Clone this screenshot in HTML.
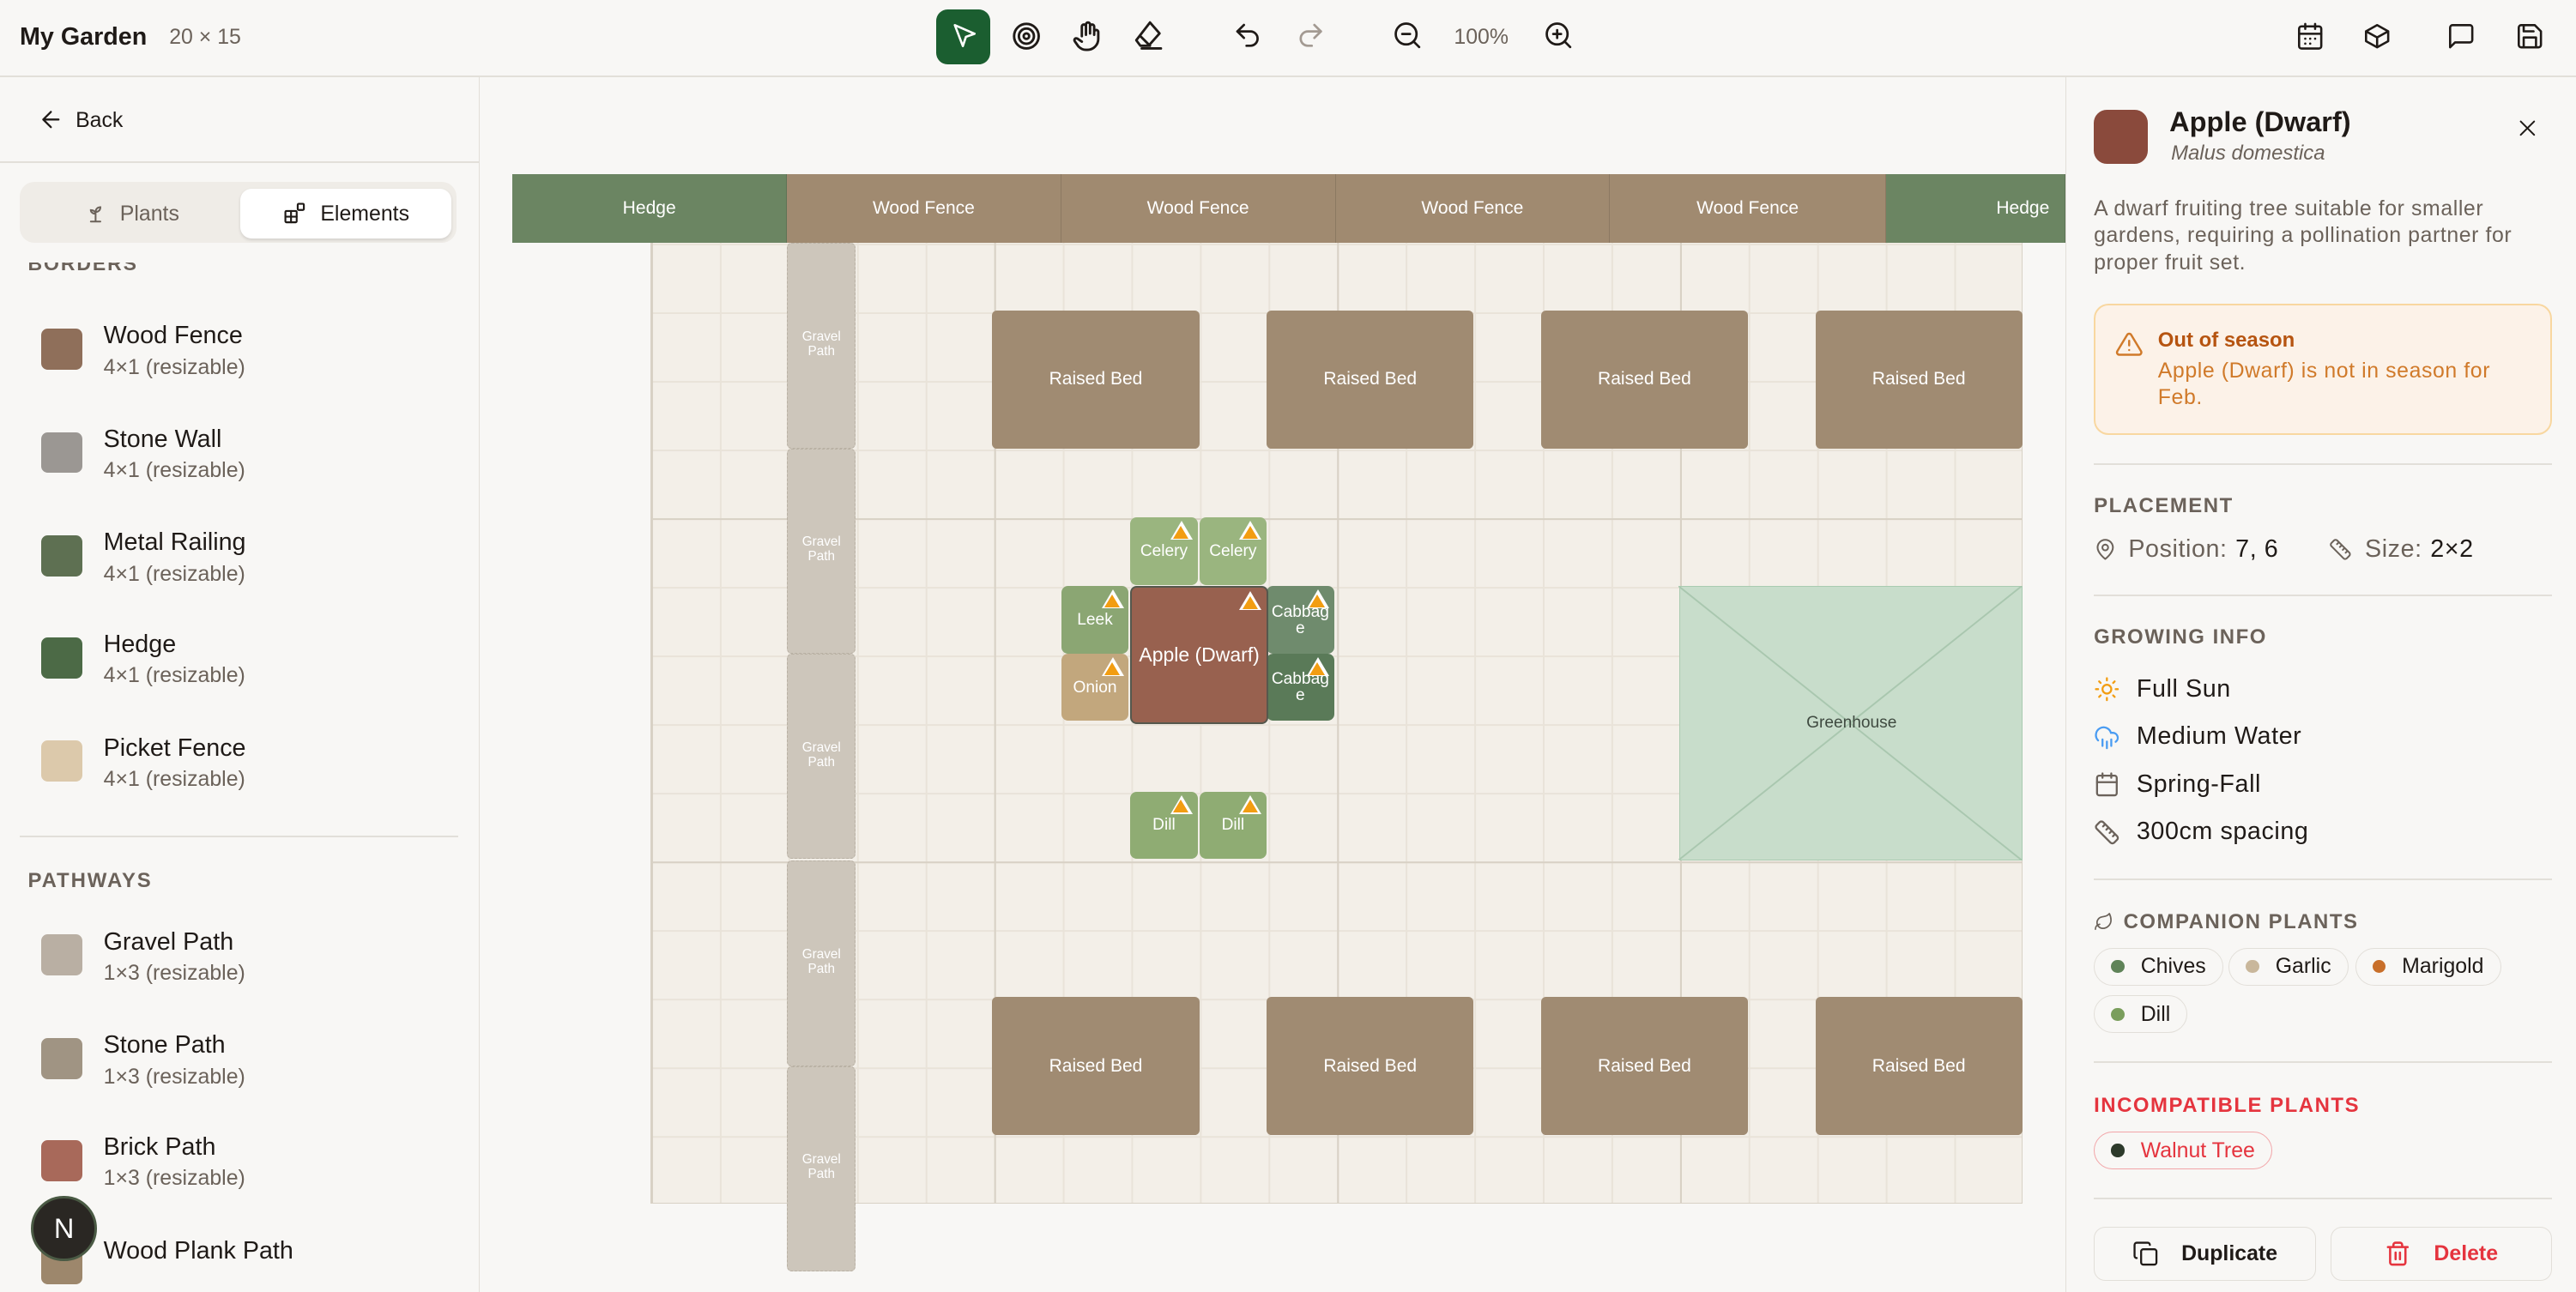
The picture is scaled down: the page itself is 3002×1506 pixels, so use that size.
<!DOCTYPE html>
<html><head><meta charset="utf-8"><style>
*{box-sizing:border-box;margin:0;padding:0}
html,body{width:3002px;height:1506px;overflow:hidden;background:#f8f7f5}
#r{width:1568px;height:787px;zoom:1.91454;position:relative;font-family:"Liberation Sans",sans-serif;color:#1f1a17;background:#f8f7f5;overflow:hidden}
.a{position:absolute}
.top{left:0;top:0;width:1568px;height:47px;border-bottom:1.5px solid #e2dfd9}
.ico{stroke:#1f1a17;fill:none;stroke-width:1.8;stroke-linecap:round;stroke-linejoin:round}
.left{left:0;top:47px;width:292px;height:740px;border-right:1px solid #e2dfd9}
.item .sw{position:absolute;left:25px;width:25px;height:25px;border-radius:4px}
.item .t{position:absolute;left:63px;font-size:15px;color:#1f1a17}
.item .s{position:absolute;left:63px;font-size:13px;color:#6b625a}
.grid{left:396px;top:106px;width:835px;height:627px;background-color:#f3efe8;
background-image:linear-gradient(90deg,#d8d1c5 1px,transparent 1px),linear-gradient(#d8d1c5 1px,transparent 1px),linear-gradient(90deg,#e9e3d9 1px,transparent 1px),linear-gradient(#e9e3d9 1px,transparent 1px);
background-size:208.75px 209px,208.75px 209px,41.75px 41.8px,41.75px 41.8px;border:1px solid #d8d1c5}
.fence{top:106px;height:42px;color:#fff;font-size:11px;display:flex;align-items:center;justify-content:center;border-right:1px solid rgba(0,0,0,.12)}
.gp{left:479px;width:42px;height:125px;background:#cdc6bb;border:1px dashed #b9b1a4;border-radius:3px;color:#fff;font-size:8px;text-align:center;padding-top:52px;line-height:9px}
.rb{width:126px;height:84px;background:#a08b72;border-radius:3px;color:#fff;font-size:11px;display:flex;align-items:center;justify-content:center}
.pl{width:41px;height:41px;border-radius:4px;color:#fff;font-size:10px;display:flex;align-items:center;justify-content:center;text-align:center;line-height:10px}
.tri{position:absolute;right:3px;top:2px;width:0;height:0;border-left:7px solid transparent;border-right:7px solid transparent;border-bottom:12px solid #fff}
.tri:after{content:"";position:absolute;left:-5px;top:3px;border-left:5px solid transparent;border-right:5px solid transparent;border-bottom:8px solid #f29d12}
.right{left:1257px;top:47px;width:311px;height:740px;border-left:1px solid #e2dfd9}
.hr{position:absolute;left:17px;width:279px;height:1px;background:#e2dfd9}
.h{position:absolute;left:17px;font-size:12.5px;font-weight:bold;letter-spacing:.8px;color:#6b625a}
.row{position:absolute;left:17px;font-size:15px;display:flex;align-items:center;gap:10px;letter-spacing:.3px}
.chip{position:absolute;height:23px;border:1px solid #e2dfd9;border-radius:12px;font-size:13px;display:flex;align-items:center;padding:0 10px;gap:10px}
.chip i{display:block;width:8px;height:8px;border-radius:50%}
.btn{position:absolute;top:700px;width:135px;height:33px;border:1px solid #e2dfd9;border-radius:7px;font-size:13px;display:flex;align-items:center;justify-content:center;gap:14px;font-weight:bold}
</style></head><body><div id="r">

<div class="a top">
 <div class="a" style="left:12px;top:14px;font-size:15px;font-weight:bold">My Garden</div>
 <div class="a" style="left:103px;top:15px;font-size:13px;color:#6b625a">20 × 15</div>
 <div class="a" style="left:570px;top:6px;width:33px;height:33px;border-radius:7px;background:#1b5e30"></div>
 <svg class="a" style="left:578px;top:13px" width="18" height="18" viewBox="0 0 24 24"><path d="M4 3l16 7-7 2.5L10.5 20z" fill="none" stroke="#fff" stroke-width="1.8" stroke-linejoin="round"/></svg>
 <svg class="a ico" style="left:615px;top:12px" width="20" height="20" viewBox="0 0 24 24"><circle cx="12" cy="12" r="9"/><circle cx="12" cy="12" r="5.5"/><circle cx="12" cy="12" r="2"/></svg>
 <svg class="a ico" style="left:652px;top:12px" width="20" height="20" viewBox="0 0 24 24"><path d="M8 12V5a1.5 1.5 0 013 0v6M11 10V3.5a1.5 1.5 0 013 0V10M14 10V5a1.5 1.5 0 013 0v6M17 9a1.5 1.5 0 013 0v5a8 8 0 01-8 8h-1c-2.5 0-4-1-5.5-2.5L3 16c-.8-.9-.4-2.2.7-2.4.7-.1 1.3.2 1.8.7L8 16"/></svg>
 <svg class="a ico" style="left:690px;top:12px" width="20" height="20" viewBox="0 0 24 24"><path d="M12 2l7 8-8 9H5l-3-4zM5 12l7 7M6 21h14"/></svg>
 <svg class="a ico" style="left:750px;top:12px" width="19" height="19" viewBox="0 0 24 24"><path d="M9 14L4 9l5-5"/><path d="M4 9h10a5.5 5.5 0 010 11h-3"/></svg>
 <svg class="a ico" style="left:788px;top:12px;stroke:#a39a92" width="19" height="19" viewBox="0 0 24 24"><path d="M15 14l5-5-5-5"/><path d="M20 9H10a5.5 5.5 0 000 11h3"/></svg>
 <svg class="a ico" style="left:847px;top:12px" width="19" height="19" viewBox="0 0 24 24"><circle cx="11" cy="11" r="8"/><path d="M21 21l-4.3-4.3M8 11h6"/></svg>
 <div class="a" style="left:885px;top:15px;font-size:13px;color:#6b625a">100%</div>
 <svg class="a ico" style="left:939px;top:12px" width="19" height="19" viewBox="0 0 24 24"><circle cx="11" cy="11" r="8"/><path d="M21 21l-4.3-4.3M8 11h6M11 8v6"/></svg>
 <svg class="a ico" style="left:1397px;top:13px" width="18" height="18" viewBox="0 0 24 24"><rect x="3" y="4" width="18" height="18" rx="2"/><path d="M16 2v4M8 2v4M3 10h18M8 14h.01M12 14h.01M16 14h.01M8 18h.01M12 18h.01"/></svg>
 <svg class="a ico" style="left:1438px;top:13px" width="18" height="18" viewBox="0 0 24 24"><path d="M21 8l-9-5-9 5v8l9 5 9-5zM3 8l9 5 9-5M12 13v8"/></svg>
 <svg class="a ico" style="left:1489px;top:13px" width="18" height="18" viewBox="0 0 24 24"><path d="M21 15a2 2 0 01-2 2H7l-4 4V5a2 2 0 012-2h14a2 2 0 012 2z"/></svg>
 <svg class="a ico" style="left:1531px;top:13px" width="18" height="18" viewBox="0 0 24 24"><path d="M19 21H5a2 2 0 01-2-2V5a2 2 0 012-2h11l5 5v11a2 2 0 01-2 2z"/><path d="M17 21v-8H7v8M7 3v5h8"/></svg>
</div>

<div class="a left">
 <svg class="a ico" style="left:23px;top:18px" width="16" height="16" viewBox="0 0 24 24"><path d="M19 12H5M12 19l-7-7 7-7"/></svg>
 <div class="a" style="left:46px;top:19px;font-size:13px">Back</div>
 <div class="a" style="left:0;top:51px;width:292px;height:1px;background:#e2dfd9"></div>
 <div class="a" style="left:12px;top:64px;width:266px;height:37px;border-radius:9px;background:#efece7"></div>
 <div class="a" style="left:146px;top:68px;width:129px;height:30px;border-radius:7px;background:#fff;box-shadow:0 1px 2px rgba(0,0,0,.12)"></div>
 <svg class="a" style="left:51px;top:75px" width="14" height="16" viewBox="0 0 24 24" fill="none" stroke="#6b625a" stroke-width="1.8" stroke-linecap="round"><path d="M7 20h10M12 20V10M12 10c0-3 2-5 5-5 0 3-2 5-5 5zM12 12c-3 0-5-2-5-4 3 0 5 2 5 4z"/></svg>
 <div class="a" style="left:73px;top:76px;font-size:13px;color:#6b625a">Plants</div>
 <svg class="a ico" style="left:172px;top:75px" width="15" height="15" viewBox="0 0 24 24"><rect x="3" y="10" width="11" height="11" rx="1"/><path d="M3 15.5h11M8.5 10v11"/><rect x="15" y="3" width="6" height="6" rx="1"/></svg>
 <div class="a" style="left:195px;top:76px;font-size:13px">Elements</div>
 <div class="a" style="left:17px;top:113px;font-size:12px;font-weight:bold;color:#6b625a;letter-spacing:1px;height:8px;overflow:hidden;line-height:2px">BORDERS</div>
 <div class="item"><div class="sw" style="top:153px;background:#8f6f5a"></div><div class="t" style="top:149px">Wood Fence</div><div class="s" style="top:169px">4×1 (resizable)</div></div>
 <div class="item"><div class="sw" style="top:216px;background:#9b9793"></div><div class="t" style="top:212px">Stone Wall</div><div class="s" style="top:232px">4×1 (resizable)</div></div>
 <div class="item"><div class="sw" style="top:279px;background:#5e7052"></div><div class="t" style="top:275px">Metal Railing</div><div class="s" style="top:295px">4×1 (resizable)</div></div>
 <div class="item"><div class="sw" style="top:341px;background:#4c6a46"></div><div class="t" style="top:337px">Hedge</div><div class="s" style="top:357px">4×1 (resizable)</div></div>
 <div class="item"><div class="sw" style="top:404px;background:#dcc9ab"></div><div class="t" style="top:400px">Picket Fence</div><div class="s" style="top:420px">4×1 (resizable)</div></div>
 <div class="a" style="left:12px;top:462px;width:267px;height:1px;background:#e2dfd9"></div>
 <div class="a" style="left:17px;top:482px;font-size:12.5px;font-weight:bold;color:#6b625a;letter-spacing:1px">PATHWAYS</div>
 <div class="item"><div class="sw" style="top:522px;background:#b9afa3"></div><div class="t" style="top:518px">Gravel Path</div><div class="s" style="top:538px">1×3 (resizable)</div></div>
 <div class="item"><div class="sw" style="top:585px;background:#a09483"></div><div class="t" style="top:581px">Stone Path</div><div class="s" style="top:601px">1×3 (resizable)</div></div>
 <div class="item"><div class="sw" style="top:647px;background:#a8695a"></div><div class="t" style="top:643px">Brick Path</div><div class="s" style="top:663px">1×3 (resizable)</div></div>
 <div class="item"><div class="sw" style="top:710px;background:#9d876c"></div><div class="t" style="top:706px">Wood Plank Path</div></div>
 <div class="a" style="left:19px;top:681px;width:40px;height:40px;border-radius:50%;background:#2a2723;border:2px solid #4a5a44;color:#fff;font-size:17px;display:flex;align-items:center;justify-content:center">N</div>
</div>

<div class="a grid"></div>
<div class="a fence" style="left:312px;width:167px;background:#6b8562">Hedge</div>
<div class="a fence" style="left:479px;width:167px;background:#a08a70">Wood Fence</div>
<div class="a fence" style="left:646px;width:167px;background:#a08a70">Wood Fence</div>
<div class="a fence" style="left:813px;width:167px;background:#a08a70">Wood Fence</div>
<div class="a fence" style="left:980px;width:168px;background:#a08a70">Wood Fence</div>
<div class="a fence" style="left:1148px;width:109px;background:#6b8562;justify-content:flex-end;padding-right:9px">Hedge</div>

<div class="a gp" style="top:148px">Gravel<br>Path</div>
<div class="a gp" style="top:273px">Gravel<br>Path</div>
<div class="a gp" style="top:398px">Gravel<br>Path</div>
<div class="a gp" style="top:524px">Gravel<br>Path</div>
<div class="a gp" style="top:649px">Gravel<br>Path</div>

<div class="a rb" style="left:604px;top:189px">Raised Bed</div>
<div class="a rb" style="left:771px;top:189px">Raised Bed</div>
<div class="a rb" style="left:938px;top:189px">Raised Bed</div>
<div class="a rb" style="left:1105px;top:189px">Raised Bed</div>
<div class="a rb" style="left:604px;top:607px">Raised Bed</div>
<div class="a rb" style="left:771px;top:607px">Raised Bed</div>
<div class="a rb" style="left:938px;top:607px">Raised Bed</div>
<div class="a rb" style="left:1105px;top:607px">Raised Bed</div>

<div class="a" style="left:1022px;top:357px;width:209px;height:167px;background:#c8ddcb;border:1px solid #a9cbb0"><svg width="209" height="167" style="position:absolute;left:-1px;top:-1px"><path d="M0 0L209 167M209 0L0 167" stroke="#a9c7af" stroke-width="1"/></svg><div class="a" style="left:0;width:209px;top:77px;text-align:center;font-size:10px;color:#3f4a40">Greenhouse</div></div>

<div class="a pl" style="left:688px;top:315px;background:#9ab57f">Celery<div class="tri"></div></div>
<div class="a pl" style="left:730px;top:315px;background:#9ab57f">Celery<div class="tri"></div></div>
<div class="a pl" style="left:646px;top:357px;background:#8ba673">Leek<div class="tri"></div></div>
<div class="a pl" style="left:646px;top:398px;background:#c2a77d">Onion<div class="tri"></div></div>
<div class="a pl" style="left:771px;top:357px;background:#6f8b6d">Cabbag<br>e<div class="tri"></div></div>
<div class="a pl" style="left:771px;top:398px;background:#5a7a58">Cabbag<br>e<div class="tri"></div></div>
<div class="a pl" style="left:688px;top:357px;width:84px;height:84px;background:#98614f;border:1.5px solid #55584d;font-size:12px">Apple (Dwarf)<div class="tri"></div></div>
<div class="a pl" style="left:688px;top:482px;background:#8fac73">Dill<div class="tri"></div></div>
<div class="a pl" style="left:730px;top:482px;background:#8fac73">Dill<div class="tri"></div></div>

<div class="a right">
 <div class="a" style="left:17px;top:20px;width:33px;height:33px;border-radius:8px;background:#8a4a3c"></div>
 <div class="a" style="left:63px;top:18px;font-size:17px;font-weight:bold">Apple (Dwarf)</div>
 <div class="a" style="left:64px;top:39px;font-size:12.5px;font-style:italic;color:#6b625a">Malus domestica</div>
 <svg class="a ico" style="left:274px;top:24px" width="14" height="14" viewBox="0 0 24 24"><path d="M5 5l14 14M19 5L5 19"/></svg>
 <div class="a" style="left:17px;top:72px;width:255px;font-size:13px;letter-spacing:.3px;line-height:16.5px;color:#6b625a">A dwarf fruiting tree suitable for smaller gardens, requiring a pollination partner for proper fruit set.</div>
 <div class="a" style="left:17px;top:138px;width:279px;height:80px;border:1.5px solid #f8d7a0;border-radius:9px;background:#fcf2e8"></div>
 <svg class="a" style="left:30px;top:154px" width="17" height="17" viewBox="0 0 24 24" fill="none" stroke="#d07a2a" stroke-width="1.8" stroke-linecap="round" stroke-linejoin="round"><path d="M10.3 3.9L1.8 18a2 2 0 001.7 3h17a2 2 0 001.7-3L13.7 3.9a2 2 0 00-3.4 0zM12 9v4M12 17h.01"/></svg>
 <div class="a" style="left:56px;top:153px;font-size:12.5px;font-weight:bold;color:#b65410">Out of season</div>
 <div class="a" style="left:56px;top:171px;width:210px;font-size:13px;letter-spacing:.3px;line-height:16px;color:#d07a2a">Apple (Dwarf) is not in season for Feb.</div>
 <div class="hr" style="top:235px"></div>
 <div class="h" style="top:254px">PLACEMENT</div>
 <div class="row" style="top:279px"><svg class="ico" style="stroke:#6b625a" width="14" height="14" viewBox="0 0 24 24"><path d="M20 10c0 6-8 12-8 12S4 16 4 10a8 8 0 0116 0z"/><circle cx="12" cy="10" r="3"/></svg><span style="color:#6b625a;margin-left:-3px">Position:</span><span style="margin-left:-5px">7, 6</span></div>
 <div class="row" style="left:160px;top:279px"><svg class="ico" style="stroke:#6b625a" width="14" height="14" viewBox="0 0 24 24"><path d="M21.3 15.3a2.4 2.4 0 010 3.4l-2.6 2.6a2.4 2.4 0 01-3.4 0L2.7 8.7a2.4 2.4 0 010-3.4l2.6-2.6a2.4 2.4 0 013.4 0zM14.5 12.5l2-2M11.5 9.5l2-2M8.5 6.5l2-2M17.5 15.5l2-2"/></svg><span style="color:#6b625a;margin-left:-2px">Size:</span><span style="margin-left:-5px">2×2</span></div>
 <div class="hr" style="top:315px"></div>
 <div class="h" style="top:334px">GROWING INFO</div>
 <div class="row" style="top:364px"><svg width="16" height="16" viewBox="0 0 24 24" fill="none" stroke="#f29d12" stroke-width="1.8" stroke-linecap="round"><circle cx="12" cy="12" r="4"/><path d="M12 2v2M12 20v2M4.9 4.9l1.4 1.4M17.7 17.7l1.4 1.4M2 12h2M20 12h2M6.3 17.7l-1.4 1.4M19.1 4.9l-1.4 1.4"/></svg>Full Sun</div>
 <div class="row" style="top:393px"><svg width="16" height="16" viewBox="0 0 24 24" fill="none" stroke="#4a9cf2" stroke-width="1.8" stroke-linecap="round"><path d="M4 14.9A7 7 0 1115.7 8h1.8a4.5 4.5 0 012.5 8.2M16 14v6M8 14v6M12 16v6"/></svg>Medium Water</div>
 <div class="row" style="top:422px"><svg class="ico" style="stroke:#6b625a" width="16" height="16" viewBox="0 0 24 24"><rect x="3" y="4" width="18" height="18" rx="2"/><path d="M16 2v4M8 2v4M3 10h18"/></svg>Spring-Fall</div>
 <div class="row" style="top:451px"><svg class="ico" style="stroke:#6b625a" width="16" height="16" viewBox="0 0 24 24"><path d="M21.3 15.3a2.4 2.4 0 010 3.4l-2.6 2.6a2.4 2.4 0 01-3.4 0L2.7 8.7a2.4 2.4 0 010-3.4l2.6-2.6a2.4 2.4 0 013.4 0zM14.5 12.5l2-2M11.5 9.5l2-2M8.5 6.5l2-2M17.5 15.5l2-2"/></svg>300cm spacing</div>
 <div class="hr" style="top:488px"></div>
 <svg class="a ico" style="left:17px;top:508px;stroke:#6b625a" width="12" height="12" viewBox="0 0 24 24"><path d="M11 20A7 7 0 019.8 6.1C15.5 5 17 4.5 19 2c1 2 2 4.2 2 8 0 5.5-4.8 10-10 10zM2 21c0-3 1.9-5.4 5.2-6"/></svg>
 <div class="h" style="left:35px;top:507px">COMPANION PLANTS</div>
 <div class="chip" style="left:17px;top:530px"><i style="background:#5f8358"></i>Chives</div>
 <div class="chip" style="left:99px;top:530px"><i style="background:#c9b79b"></i>Garlic</div>
 <div class="chip" style="left:176px;top:530px"><i style="background:#c86f2a"></i>Marigold</div>
 <div class="chip" style="left:17px;top:559px"><i style="background:#7a9e5c"></i>Dill</div>
 <div class="hr" style="top:599px"></div>
 <div class="h" style="top:619px;color:#e5343e">INCOMPATIBLE PLANTS</div>
 <div class="chip" style="left:17px;top:642px;border-color:#f2a5a8;color:#e5343e"><i style="background:#2d3a2b"></i>Walnut Tree</div>
 <div class="hr" style="top:682px"></div>
 <div class="btn" style="left:17px"><svg class="ico" width="16" height="16" viewBox="0 0 24 24"><rect x="8" y="8" width="14" height="14" rx="2"/><path d="M4 16c-1.1 0-2-.9-2-2V4c0-1.1.9-2 2-2h10c1.1 0 2 .9 2 2"/></svg>Duplicate</div>
 <div class="btn" style="left:161px;color:#e5343e"><svg width="16" height="16" viewBox="0 0 24 24" fill="none" stroke="#e5343e" stroke-width="2" stroke-linecap="round"><path d="M3 6h18M19 6v14a2 2 0 01-2 2H7a2 2 0 01-2-2V6M8 6V4a2 2 0 012-2h4a2 2 0 012 2v2M10 11v6M14 11v6"/></svg>Delete</div>
</div>
</div></body></html>
